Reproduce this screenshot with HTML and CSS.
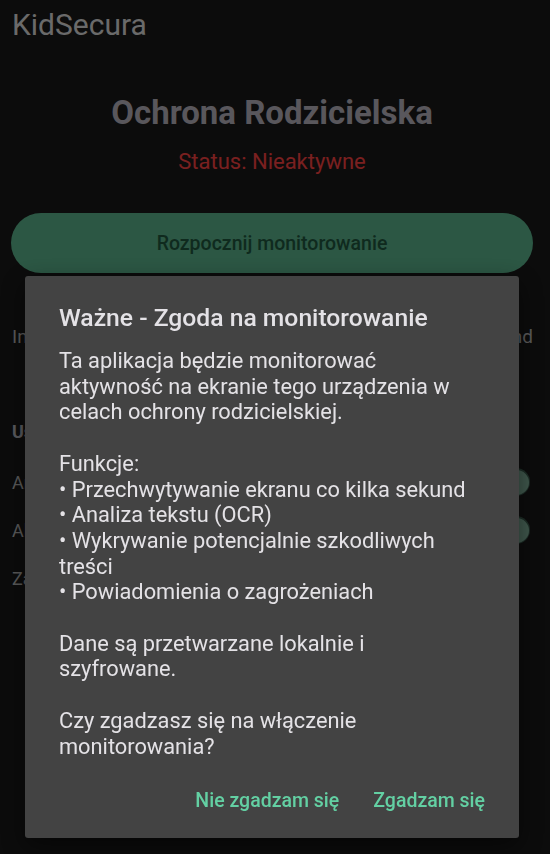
FILE: index.html
```html
<!DOCTYPE html>
<html lang="pl">
<head>
<meta charset="utf-8">
<title>KidSecura</title>
<link rel="stylesheet" href="styles.css">
</head>
<body>
<div class="app">
  <header class="appbar">KidSecura</header>
  <main class="content">
    <h1 class="headline">Ochrona Rodzicielska</h1>
    <p class="status">Status: Nieaktywne</p>
    <button class="primary">Rozpocznij monitorowanie</button>
    <p class="info">Interwał przechwytywania ekranu ustawiony na co 5 sekund</p>
    <h2 class="section">Ustawienia</h2>
    <div class="row"><span>Analiza tekstu (OCR)</span><span class="switch"><span class="thumb"></span></span></div>
    <div class="row"><span>Alerty o zagrożeniach</span><span class="switch"><span class="thumb"></span></span></div>
    <div class="row"><span>Zaawansowane</span></div>
  </main>
</div>
<div class="scrim">
  <div class="dialog" role="dialog">
    <h3 class="dlg-title">Ważne - Zgoda na monitorowanie</h3>
    <div class="dlg-body">
      <p>Ta aplikacja będzie monitorować<br>aktywność na ekranie tego urządzenia w<br>celach ochrony rodzicielskiej.</p>
      <p>Funkcje:<br>• Przechwytywanie ekranu co kilka sekund<br>• Analiza tekstu (OCR)<br>• Wykrywanie potencjalnie szkodliwych<br>treści<br>• Powiadomienia o zagrożeniach</p>
      <p>Dane są przetwarzane lokalnie i<br>szyfrowane.</p>
      <p>Czy zgadzasz się na włączenie<br>monitorowania?</p>
    </div>
    <div class="dlg-actions">
      <button class="text-btn">Nie zgadzam się</button>
      <button class="text-btn">Zgadzam się</button>
    </div>
  </div>
</div>
</body>
</html>
```
FILE: styles.css
```css
* { box-sizing: border-box; }
html, body {
  margin: 0;
  padding: 0;
  height: 100%;
  background: #181818;
  font-family: Roboto, "Noto Sans", sans-serif;
  overflow: hidden;
}
.app {
  width: 550px;
  height: 854px;
}
.appbar {
  height: 50px;
  padding-left: 12px;
  font-size: 30px;
  line-height: 50px;
  color: #d4d4d4;
}
.content {
  display: flex;
  flex-direction: column;
  padding: 0 17px 0 11px;
}
.headline {
  margin: 43px 0 0;
  font-size: 33px;
  line-height: 40px;
  font-weight: 700;
  color: #b2aeb8;
  text-align: center;
}
.status {
  margin: 15px 0 0;
  font-size: 22px;
  line-height: 28px;
  color: #f44040;
  text-align: center;
}
.primary {
  margin-top: 37px;
  height: 60px;
  border: none;
  border-radius: 30px;
  background: #58ae88;
  color: #1e543c;
  font-family: inherit;
  font-size: 19.5px;
  font-weight: 500;
}
.info {
  margin: 52px 0 0 1px;
  font-size: 19px;
  line-height: 24px;
  color: #b4b4b4;
  text-align: justify;
  text-align-last: justify;
}
.section {
  margin: 71px 0 0 1px;
  font-size: 18px;
  line-height: 24px;
  font-weight: 700;
  color: #b4b4bc;
}
.row {
  display: flex;
  align-items: center;
  justify-content: space-between;
  height: 48px;
  padding-left: 1px;
  font-size: 18px;
  color: #b4b4b4;
}
.section + .row { margin-top: 14px; }
.switch {
  position: relative;
  width: 50px;
  height: 28px;
  border-radius: 14px;
  margin-right: 3px;
  background: #3a5a4c;
}
.thumb {
  position: absolute;
  right: 1px;
  top: 1.5px;
  width: 25px;
  height: 25px;
  border-radius: 50%;
  background: #80b09a;
}
.scrim {
  position: fixed;
  inset: 0;
  background: rgba(0, 0, 0, 0.5);
  padding: 276px 0 0 25px;
}
.dialog {
  width: 494px;
  background: #434343;
  border-radius: 3px;
  padding: 27px 34px 20px;
  color: #e4e2e6;
  box-shadow: 0 8px 24px rgba(0,0,0,0.5);
}
.dlg-title {
  margin: 0;
  font-size: 24.7px;
  line-height: 30px;
  font-weight: 500;
}
.dlg-body {
  margin-top: 15px;
  font-size: 21.8px;
  line-height: 25.7px;
}
.dlg-body p {
  margin: 0 0 25.7px;
}
.dlg-body p:last-child { margin-bottom: 0; }
.dlg-actions {
  display: flex;
  justify-content: flex-end;
  gap: 34px;
  margin-top: 23px;
}
.text-btn {
  height: 36px;
  padding: 0;
  border: none;
  background: none;
  color: #63d0a3;
  font-family: inherit;
  font-size: 19.5px;
  font-weight: 500;
}
```
